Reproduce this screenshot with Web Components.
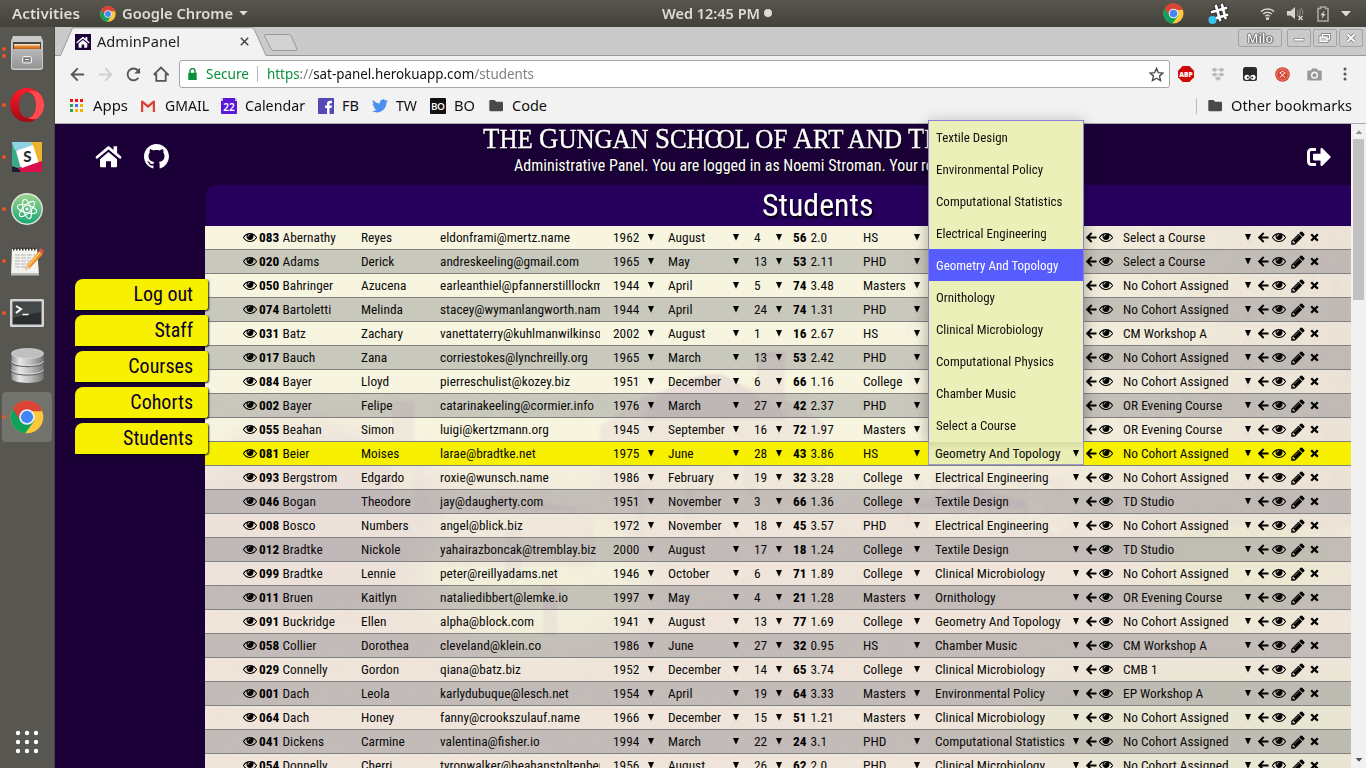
<!DOCTYPE html>
<html lang="en">
<head>
<meta charset="utf-8">
<title>AdminPanel</title>
<style>
html,body{margin:0;height:100%;overflow:hidden;background:#1b0038}
</style>
</head>
<body>
<desk-top></desk-top>
<script>
const CHROME = `<svg viewBox="0 0 48 48"><circle cx="24" cy="24" r="23" fill="#fdc83c"/><path d="M24 24L4.100 12.500A23 23 0 0 0 21.500 46.900L34 30Z" fill="#10a15b"/><path d="M24 24L4.100 12.500A23 23 0 0 1 45.500 16H24Z" fill="#da4437"/><path d="M24 14H44.700A23 23 0 0 0 4.100 12.500L14 28Z" fill="#da4437"/><circle cx="24" cy="24" r="11" fill="#f1f1f1"/><circle cx="24" cy="24" r="8.700" fill="#4286f5"/></svg>`;
const HOUSE = `<path d="M1.500 13.300L13 3.600L24.500 13.300" fill="none" stroke="currentColor" stroke-width="2.700" stroke-linecap="round" stroke-linejoin="round"/><path d="M18 2.200h3.600v8l-3.600-3zM4.500 15.200L13 8.100l8.500 7.100V22.300a.9.9 0 0 1-.9.9H15.500v-6h-5v6H5.400a.9.9 0 0 1-.9-.9z" fill="currentColor"/>`;
const FOLDER = `<svg viewBox="0 0 15 13"><path d="M1.500 1h4l1.700 1.800h5.600c.8 0 1.200.5 1.200 1.200v7c0 .8-.5 1.200-1.200 1.200H1.500c-.8 0-1.200-.4-1.200-1.200V2.200C.3 1.400.7 1 1.500 1z" fill="#4a4a4a"/></svg>`;
const ICONS = {
chrome: CHROME,
home: `<svg viewBox="0 0 26 24">${HOUSE}</svg>`,
favicon: `<svg viewBox="0 0 16 16"><rect width="16" height="16" fill="#1b0038"/><g transform="translate(1.300 1.800) scale(.51)" color="#fff">${HOUSE}</g></svg>`,
github: `<svg viewBox="0 0 16 16"><path fill="currentColor" d="M8 0C3.580 0 0 3.580 0 8c0 3.540 2.290 6.530 5.470 7.590.4.070.55-.170.55-.380 0-.190-.010-.820-.010-1.490-2.010.370-2.530-.490-2.690-.940-.090-.230-.480-.940-.820-1.130-.280-.150-.680-.520-.010-.530.630-.010 1.080.580 1.230.820.720 1.210 1.870.870 2.330.660.070-.520.280-.870.510-1.070-1.780-.200-3.640-.890-3.640-3.950 0-.870.310-1.590.820-2.150-.080-.200-.360-1.020.080-2.120 0 0 .670-.210 2.200.820.640-.180 1.320-.270 2-.270.680 0 1.360.090 2 .270 1.530-1.040 2.200-.820 2.200-.820.440 1.100.160 1.920.080 2.120.510.560.820 1.270.820 2.150 0 3.070-1.870 3.750-3.650 3.950.290.250.540.730.540 1.480 0 1.070-.010 1.930-.010 2.200 0 .210.150.460.550.380A8.013 8.013 0 0 0 16 8c0-4.420-3.580-8-8-8z"/></svg>`,
signout: `<svg viewBox="0 64 512 384"><path fill="currentColor" d="M497 273L329 441c-15 15-41 4.500-41-17v-96H152c-13.300 0-24-10.700-24-24v-96c0-13.300 10.700-24 24-24h136V88c0-21.400 25.900-32 41-17l168 168c9.300 9.400 9.300 24.600 0 34zM192 436v-40c0-6.600-5.400-12-12-12H96c-17.700 0-32-14.300-32-32V160c0-17.700 14.300-32 32-32h84c6.600 0 12-5.400 12-12V76c0-6.600-5.400-12-12-12H96c-53 0-96 43-96 96v192c0 53 43 96 96 96h84c6.600 0 12-5.400 12-12z"/></svg>`,
eye: `<svg viewBox="0 384 1792 1152"><path d="M1664 960q-152-236-381-353 61 104 61 225 0 185-131.500 316.500t-316.500 131.500-316.500-131.500-131.500-316.500q0-121 61-225-229 117-381 353 133 205 333.500 326.500t434.500 121.500 434.500-121.500 333.500-326.500zm-720-384q0-20-14-34t-34-14q-125 0-214.500 89.500t-89.500 214.500q0 20 14 34t34 14 34-14 14-34q0-86 61-147t147-61q20 0 34-14t14-34zm848 384q0 34-20 69-140 230-376.500 368.500t-499.500 138.500-499.500-139-376.500-368q-20-35-20-69t20-69q140-229 376.500-368t499.500-139 499.500 139 376.500 368q20 35 20 69z"/></svg>`,
pencil: `<svg viewBox="100 100 1600 1600"><path d="M491 1536l91-91-235-235-91 91v107h128v128h107zm523-928q0-22-22-22-10 0-17 7l-542 542q-7 7-7 17 0 22 22 22 10 0 17-7l542-542q7-7 7-17zm-54-192l416 416-832 832h-416v-416zm683 96q0 53-37 90l-166 166-416-416 166-165q36-38 90-38 53 0 91 38l235 234q37 39 37 91z"/></svg>`,
left: `<svg viewBox="0 0 11 11"><path d="M10.500 5.500H1.500M5.700 1L1.200 5.500L5.700 10" fill="none" stroke="#000" stroke-width="1.900"/></svg>`,
times: `<svg viewBox="0 0 9 9"><path d="M1.200 1.200L7.800 7.800M7.800 1.200L1.200 7.800" stroke="#000" stroke-width="2.300"/></svg>`,
caret: `<svg viewBox="0 0 6 7"><path d="M0 0h6L3 6.800z"/></svg>`,
files: `<svg viewBox="0 0 32 34"><defs><linearGradient id="a" x2="0" y2="1"><stop stop-color="#b8b8b8"/><stop offset="1" stop-color="#939393"/></linearGradient></defs><path d="M2 0h28l2 5v26q0 3-3 3H3q-3 0-3-3V5z" fill="#c9c9c9"/><path d="M2 6h28v9H2z" fill="#444"/><path d="M3 8h26v2H3z" fill="#f3dfc6"/><path d="M3 9.500h26V15H3z" fill="#e98a35"/><path d="M3 11.500h26V15H3z" fill="#c5651c"/><path d="M1 13h30v17q0 2.500-2.500 2.500h-25Q1 32.500 1 30z" fill="url(#a)"/><rect x="11.500" y="20.500" width="9" height="6.500" rx="1" fill="#999" stroke="#eee"/><path d="M13.500 22.500h5v2h-5z" fill="#fff" stroke="#555" stroke-width=".8"/></svg>`,
opera: `<svg viewBox="0 0 34 34"><defs><linearGradient id="a" x2="0" y2="1"><stop stop-color="#ff1b2d"/><stop offset="1" stop-color="#a00a16"/></linearGradient></defs><path fill-rule="evenodd" fill="url(#a)" d="M17 0a17 17 0 1 0 0 34a17 17 0 0 0 0-34zM17.500 4.200c4.700 0 8.500 5.700 8.500 12.800s-3.800 12.800-8.500 12.800S9 24.100 9 17S12.800 4.200 17.500 4.200z"/><path d="M18 3.500a17 17 0 0 1 10.300.7a17 17 0 0 1 0 25.600c-3 2-7 2-10.300.3c5-1 8-6 8-13.100S23 4.500 18 3.500z" fill="#ff4a4f"/></svg>`,
slack: `<svg viewBox="0 0 30 30"><rect width="30" height="30" rx="1.500" fill="#fff"/><path d="M0 0h24L21 4L4 9.500L0 6z" fill="#8ed3df"/><path d="M0 1L9 27L0 24z" fill="#39a082"/><path d="M0 4l4 5l5 18l-9-3z" fill="#3aa985"/><path d="M19 0h11v23L25.500 20z" fill="#ecb32e"/><path d="M30 19v11H7L6 26z" fill="#d9104b"/><path d="M0 24l6 2l3 4H0z" fill="#1c1c33"/><path d="M5 8.500L21 3L26.500 20L10 26z" fill="#fff"/><text x="15.500" y="20" text-anchor="middle" font-family="Lato" font-weight="900" font-size="15" fill="#2c2d30">S</text></svg>`,
atom: `<svg viewBox="0 0 32 32"><defs><linearGradient id="a" x2="0" y2="1"><stop stop-color="#9ad58c"/><stop offset="1" stop-color="#19a675"/></linearGradient></defs><circle cx="16" cy="16" r="15.200" fill="url(#a)" stroke="#e4e4e0" stroke-width="1.400"/><g fill="none" stroke="#fff" stroke-width="1.100"><ellipse cx="16" cy="16" rx="10" ry="3.800" transform="rotate(15 16 16)"/><ellipse cx="16" cy="16" rx="10" ry="3.800" transform="rotate(75 16 16)"/><ellipse cx="16" cy="16" rx="10" ry="3.800" transform="rotate(135 16 16)"/></g><circle cx="16" cy="16" r="1.500" fill="#fff"/></svg>`,
notes: `<svg viewBox="0 0 34 30"><path d="M2 3h25l2 26H1z" fill="#f2f2ee"/><path d="M1 27h28v2.500H1z" fill="#bdbdb8"/><path d="M3 3h24" stroke="#333" stroke-width="3" stroke-dasharray="1.500 1.500"/><path d="M5 9h20M5 12h16M5 15h18M5 18h14M5 21h13" stroke="#b5b5b5" stroke-width="1" stroke-dasharray="5 1"/><path d="M15 24L17 19L29 5L33 8L20 22z" fill="#f08a24"/><path d="M17.500 19L29.500 5.500L31 6.500L19 20.500z" fill="#ffbe62"/><path d="M15 24l2-5l3 3z" fill="#e5cfa5"/><path d="M29 5l2-3l3 3l-1.500 3z" fill="#e05050"/></svg>`,
terminal: `<svg viewBox="0 0 34 28"><rect width="34" height="28" rx="1.500" fill="#d5d5d5"/><rect x="2.500" y="2.500" width="29" height="23" fill="#2b2e2e"/><path d="M3 3h28v10L3 19z" fill="#454848"/><path d="M6 7l5 3l-5 4" fill="none" stroke="#fff" stroke-width="2"/><path d="M12.500 15.500h6" stroke="#fff" stroke-width="1.500"/></svg>`,
db: `<svg viewBox="0 0 33 35"><defs><linearGradient id="a"><stop stop-color="#8f8f8f"/><stop offset=".25" stop-color="#e6e6e6"/><stop offset=".6" stop-color="#bcbcbc"/><stop offset="1" stop-color="#777"/></linearGradient></defs><path d="M.5 5v25c0 6.500 32 6.500 32 0V5z" fill="url(#a)"/><path d="M.5 14c2 6 30 6 32 0M.5 22.500c2 6 30 6 32 0" fill="none" stroke="#666" stroke-width="1.300"/><path d="M.5 13c2 6 30 6 32 0M.5 21.500c2 6 30 6 32 0" fill="none" stroke="#eee" stroke-width=".8"/><ellipse cx="16.500" cy="5.500" rx="16" ry="5" fill="#bfbfbf" stroke="#dedede" stroke-width=".7"/></svg>`,
dots: `<svg viewBox="0 0 24 24" fill="#fff"><circle cx="3" cy="3" r="2.200"/><circle cx="12" cy="3" r="2.200"/><circle cx="21" cy="3" r="2.200"/><circle cx="3" cy="12" r="2.200"/><circle cx="12" cy="12" r="2.200"/><circle cx="21" cy="12" r="2.200"/><circle cx="3" cy="21" r="2.200"/><circle cx="12" cy="21" r="2.200"/><circle cx="21" cy="21" r="2.200"/></svg>`,
back: `<svg viewBox="0 0 16 16"><path d="M15 8H2.200M8.300 1.500L1.800 8L8.300 14.500" fill="none" stroke="currentColor" stroke-width="2"/></svg>`,
reload: `<svg viewBox="0 0 16 16"><path d="M13.200 11.500A6.300 6.300 0 1 1 12.700 3.700" fill="none" stroke="#55565a" stroke-width="2"/><path d="M15 .8V7H8.800z" fill="#55565a"/></svg>`,
house2: `<svg viewBox="0 0 16 16"><path d="M3.300 7.500v7.300h9.400V7.500M.8 8.700L8 1.500l7.200 7.200h-2.500M.8 8.700h2.500" fill="none" stroke="#55565a" stroke-width="1.800"/></svg>`,
lock: `<svg viewBox="0 0 9 12"><path d="M.3 4.800h8.400V12H.3z" fill="#0a8f3c"/><path d="M2 5V3a2.500 2.500 0 0 1 5 0v2" fill="none" stroke="#0a8f3c" stroke-width="1.400"/></svg>`,
star: `<svg viewBox="0 0 14 14"><path d="M7 1.300L8.700 5.300L13 5.700L9.800 8.500L10.800 12.700L7 10.500L3.200 12.700L4.200 8.500L1 5.700L5.300 5.300Z" fill="none" stroke="#4a4b50" stroke-width="1.300"/></svg>`,
abp: `<svg viewBox="0 0 16 16"><path d="M4.700 0h6.600L16 4.700v6.600L11.300 16H4.700L0 11.300V4.700z" fill="#d00707"/><text x="8" y="10.800" text-anchor="middle" font-family="Open Sans" font-size="7.500" font-weight="800" fill="#fff" textLength="13.500" lengthAdjust="spacingAndGlyphs">ABP</text></svg>`,
dropbox: `<svg viewBox="0 0 14 14" fill="#b9b9b9"><path d="M3.700.5L7 2.700L3.700 4.900L.4 2.700zM10.300.5l3.300 2.200l-3.300 2.200L7 2.700zM3.700 5.400L7 7.600L3.700 9.800L.4 7.600zM10.300 5.400l3.300 2.200l-3.300 2.200L7 7.600zM7 9.300l3.200 2.200L7 13.700l-3.200-2.200z"/></svg>`,
mask: `<svg viewBox="0 0 14 14"><rect width="14" height="14" rx="2.500" fill="#2a2a2a"/><circle cx="4" cy="10.300" r="2.600" fill="#fff"/><circle cx="10" cy="10.300" r="2.600" fill="#fff"/><circle cx="4.800" cy="10.500" r="1" fill="#222"/><circle cx="9.200" cy="10.500" r="1" fill="#222"/></svg>`,
redx: `<svg viewBox="0 0 15 15"><circle cx="7.500" cy="7.500" r="7.300" fill="#d4452f"/><circle cx="7.500" cy="7.500" r="5.600" fill="none" stroke="#eb9a89" stroke-width=".8"/><path d="M4.500 6.200l3-2l3 2M5 5.800l5 4.700M10 5.800l-5 4.700" stroke="#fff" fill="none" stroke-width=".9"/></svg>`,
camera: `<svg viewBox="0 0 15 13"><path d="M1 2.500h3L5.200.5h4.600L11 2.500h3q.7 0 .7.700v8.600q0 .7-.7.700H1q-.7 0-.7-.7V3.200q0-.7.7-.7z" fill="#999"/><circle cx="7.500" cy="7.200" r="3.600" fill="#f2f2f2"/><circle cx="7.500" cy="7.200" r="2" fill="#999"/></svg>`,
kebab: `<svg viewBox="0 0 4 14" fill="#55565a"><circle cx="2" cy="2" r="1.500"/><circle cx="2" cy="7" r="1.500"/><circle cx="2" cy="12" r="1.500"/></svg>`,
apps: `<svg viewBox="0 0 13 13"><path d="M0 0h3v3H0zM5 0h3v3H5zM10 0h3v3h-3z" fill="#f01212"/><path d="M0 5h3v3H0zM0 10h3v3H0z" fill="#2aa54f"/><path d="M5 5h3v3H5z" fill="#4c6cf0"/><path d="M10 5h3v3h-3zM5 10h3v3H5zM10 10h3v3h-3z" fill="#f4b400"/></svg>`,
gmail: `<svg viewBox="0 0 14 12"><rect y="1" width="14" height="11" fill="#ececec"/><path d="M0 1.500Q0 .3 1.500.5L7 5L12.500.5Q14 .3 14 1.500V12h-2.200V4L7 8L2.200 4V12H0z" fill="#dc4234"/></svg>`,
cal: `<svg viewBox="0 0 16 16"><rect y="1" width="16" height="15" rx="1" fill="#5a17d6"/><path d="M0 0h16v3H0z" fill="#c8c8d4"/><path d="M2 0h12v3H2z" fill="#5a17d6"/><text x="8" y="12.500" text-anchor="middle" font-family="Noto Sans" font-weight="600" font-size="10" fill="#fff" textLength="11.500" lengthAdjust="spacingAndGlyphs">22</text></svg>`,
fb: `<svg viewBox="0 0 16 16"><rect width="16" height="16" rx=".8" fill="#5547b5"/><path d="M9 16V10H7V7.600h2V6Q9 2.800 12 2.800h2V5.200h-1.400Q11.500 5.200 11.500 6.300V7.600H14L13.600 10H11.500v6z" fill="#fff"/></svg>`,
tw: `<svg viewBox="0 0 24 20"><path fill="#4a8ff0" d="M24 2.400c-.9.400-1.800.7-2.800.8 1-.6 1.800-1.600 2.200-2.700-1 .6-2 1-3.100 1.200A4.900 4.900 0 0 0 11.900 6.200C7.800 6 4.200 4 1.700.9c-1.300 2.200-.7 5.100 1.500 6.600-.8 0-1.600-.2-2.200-.6 0 2.300 1.600 4.400 3.900 4.900-.7.200-1.500.2-2.200.1.600 2 2.400 3.400 4.600 3.400A9.900 9.900 0 0 1 0 17.400a14 14 0 0 0 7.500 2.200c9.100 0 14.300-7.700 14-14.600 1-.7 1.800-1.600 2.500-2.600z"/></svg>`,
bo: `<svg viewBox="0 0 16 16"><rect width="16" height="16" rx="1" fill="#111"/><text x="8" y="11.800" text-anchor="middle" font-family="Lato" font-weight="700" font-size="10" fill="#fff" textLength="13.500" lengthAdjust="spacingAndGlyphs">BO</text></svg>`,
folder: FOLDER,
hash: `<svg viewBox="0 0 21 21"><g stroke="#333" stroke-width="4.800" stroke-linecap="round"><path d="M8 3l4 14M14 2l3.500 13M4 9l14-4M5 16l14-4"/></g><g stroke="#fff" stroke-width="2.700" stroke-linecap="round"><path d="M8 3l4 14M14 2l3.500 13M4 9l14-4M5 16l14-4"/></g><circle cx="4.500" cy="17" r="4" fill="#39c3ef"/></svg>`,
wifi: `<svg viewBox="0 0 16 14" fill="none" stroke="#d5d3cd" stroke-width="1.600"><path d="M1 5a10 10 0 0 1 14 0M3.300 7.600a6.600 6.600 0 0 1 9.400 0M5.500 10a3.600 3.600 0 0 1 5 0"/><circle cx="8" cy="12.500" r="1" fill="#ddd"/></svg>`,
vol: `<svg viewBox="0 0 17 15"><path d="M0 5h3.500L8 1v12L3.500 9.500H0z" fill="#d5d3cd"/><path d="M10 4.500q1.700 2.500 0 5.500M12 3q2.500 4 0 7.500M14 1.500q2.500 4 1.500 7" fill="none" stroke="#88867f" stroke-width="1.200"/><path d="M11.500 10l4 4M15.500 10l-4 4" stroke="#d5d3cd" stroke-width="1.500"/></svg>`,
bat: `<svg viewBox="0 0 12 16"><path d="M1 2.500h2.500V1h5v1.500H11V15H1z" fill="none" stroke="#aaa8a2" stroke-width="1.600"/><path d="M7.500 4.500L3.300 9.300H5.600L4.500 13L8.700 8H6.400z" fill="#d5d3cd"/></svg>`,
down: `<svg viewBox="0 0 10 6"><path d="M0 0h10L5 5.500z" fill="currentColor"/></svg>`,
min: `<svg viewBox="0 0 22 16"><rect x="6" y="8.500" width="10" height="2.500" fill="#fff" stroke="#888" stroke-width=".8"/></svg>`,
max: `<svg viewBox="0 0 22 16"><g fill="none" stroke="#777" stroke-width="2.800"><rect x="8.500" y="4.500" width="7" height="4.500"/><rect x="6" y="7" width="7" height="4.500"/></g><g fill="none" stroke="#fff" stroke-width="1.300"><rect x="8.500" y="4.500" width="7" height="4.500"/><rect x="6" y="7" width="7" height="4.500" fill="#ccc"/></g></svg>`,
close: `<svg viewBox="0 0 22 16"><path d="M7.500 4.500l7 7M14.500 4.500l-7 7" stroke="#777" stroke-width="3.400"/><path d="M7.500 4.500l7 7M14.500 4.500l-7 7" stroke="#fff" stroke-width="1.900"/></svg>`,
tabx: `<svg viewBox="0 0 9 9"><path d="M.8.8l7.400 7.400M8.200.8L.8 8.200" stroke="#444" stroke-width="1.500"/></svg>`
};
function make(el, css, html){
  const r = el.shadowRoot || el.attachShadow({mode:'open'});
  r.innerHTML = `<style>*{box-sizing:border-box}${css}</style>${html}`;
  return r;
}
const ic = (n,w,h,m='',c='') => `<ui-icon name="${n}" style="width:${w}px;height:${h||w}px;${m?`margin-left:${m}px;`:''}${c?`color:${c}`:''}"></ui-icon>`;

customElements.define('ui-icon', class extends HTMLElement{
  connectedCallback(){ make(this, `:host{display:block;flex:none}svg{display:block;width:100%;height:100%}`, ICONS[this.getAttribute('name')]||''); }
});

/* Condensed text: squeezed by a shared ratio, or to the width in the w attribute. */
const PROBE = document.createElement('span');
PROBE.style.cssText = 'position:absolute;visibility:hidden;white-space:pre;font:400 40px "Roboto Condensed",Roboto,sans-serif;font-stretch:condensed';
PROBE.textContent = 'Geometry And Topology';
document.body.append(PROBE);
const K = 125.5 / (PROBE.getBoundingClientRect().width / 3);
PROBE.remove();
customElements.define('fit-text', class extends HTMLElement{
  connectedCallback(){
    const r = make(this, `:host{display:block;flex:none;white-space:pre}span{display:inline-block;transform-origin:0 50%}`, `<span><slot></slot></span>`);
    const s = r.querySelector('span'), n = s.getBoundingClientRect().width;
    const w = this.hasAttribute('w') ? +this.getAttribute('w') : n*K*(+this.getAttribute('r')||1);
    if (Math.abs(w/n-1) > .004) s.style.transform = `scaleX(${w/n})`;
    this.style.width = w+'px';
  }
});

customElements.define('top-bar', class extends HTMLElement{
  connectedCallback(){ make(this, `:host{display:flex;align-items:center;height:27px;background:linear-gradient(#58564e,#42413b);color:#dfdcd5;font:600 14px/26px "Noto Sans",sans-serif}
  .dot{width:8px;height:8px;border-radius:50%;background:#dfdcd5;margin:-1px 0 0 4px}`,
  `<fit-text w="68" style="margin-left:12px">Activities</fit-text>${ic('chrome',16,16,20)}<fit-text w="111" style="margin-left:6px">Google Chrome</fit-text>${ic('down',9,5,6)}
  <fit-text w="98" style="margin-left:414px">Wed 12:45 PM</fit-text><span class="dot"></span>${ic('chrome',21,21,391)}${ic('hash',21,21,24)}${ic('wifi',15,13,31)}${ic('vol',17,15,12)}${ic('bat',12,16,13)}${ic('down',10,6,12)}`); }
});

customElements.define('app-launcher', class extends HTMLElement{
  connectedCallback(){
    const a=[['files',32,34,2],['opera',34,34,1],['slack',30,30,1],['atom',32,32,1],['notes',34,30,1],['terminal',34,28,1],['db',33,35,0],['chrome',34,34,1]];
    make(this, `:host{display:flex;flex-direction:column;width:55px;background:#585650;box-shadow:inset -1px 0 #45443f}
    .i{position:relative;height:52.100px;display:flex;align-items:center;justify-content:center;padding:0 1px 1px 0}
    .i.on::before{content:"";position:absolute;left:2px;top:0;width:50px;height:50px;border-radius:4px;background:#72736c}
    ui-icon{position:relative}
    .d{position:absolute;left:2px;display:grid;gap:3px}.d i{width:4px;height:4px;border-radius:50%;background:#e9571f}
    .g{margin:auto 0 14px 15px}`,
    a.map(([n,w,h,d],i)=>`<div class="i ${i==7?'on':''}"><span class="d">${'<i></i>'.repeat(d)}</span>${ic(n,w,h)}</div>`).join('')+`<div class="g">${ic('dots',24,24)}</div>`);
  }
});

customElements.define('tab-strip', class extends HTMLElement{
  connectedCallback(){ make(this, `:host{display:flex;height:29px;background:linear-gradient(#cacaca 28px,#999 28px)}
  .tab{width:215px;height:29px;display:flex;align-items:center;background:no-repeat url("data:image/svg+xml,%3Csvg xmlns='http://www.w3.org/2000/svg' width='215' height='29'%3E%3Cpath d='M0 29L0 28.500H5.500L17.500 1H198.500L211 28.500H215V29z' fill='%23f2f2f2'/%3E%3Cpath d='M0 28.500H5.500L17.500.8H198.500L211 28.500H215' fill='none' stroke='%23999'/%3E%3C/svg%3E");font:14.500px "Noto Sans",sans-serif;color:#1d1d1d}
  fit-text{margin-top:-1px}
  .new{width:36px;height:18px;margin:7px 0 0 -7px}
  .btn{height:18px;border:1px solid #a3a3a3;border-radius:2px;margin-top:2px;display:flex;align-items:center;justify-content:center;font:600 13px "Noto Sans",sans-serif;color:#f6f6f6;text-shadow:0 0 1px #333,0 0 2px #333,0 0 1px #333,0 0 1px #333}`,
  `<div class="tab">${ic('favicon',16,16,20)}<fit-text w="83" style="margin-left:6px">AdminPanel</fit-text>${ic('tabx',9,9,60)}</div>
  <svg class="new" viewBox="0 0 36 18"><path d="M3 .5H26q1.500 0 2.300 1.500L34 15q.7 1.500-1 1.500H10.500Q9 16.500 8.200 15L1.500 2Q1 .5 3 .5z" fill="#d3d3d3" stroke="#999"/></svg>
  <div class="btn" style="width:44px;margin-left:939px"><fit-text w="26">Milo</fit-text></div><div class="btn" style="width:24px;margin-left:5px">${ic('min',22,16)}</div><div class="btn" style="width:24px;margin-left:2px">${ic('max',22,16)}</div><div class="btn" style="width:24px;margin-left:2px">${ic('close',22,16)}</div>`); }
});

customElements.define('tool-bar', class extends HTMLElement{
  connectedCallback(){ make(this, `:host{display:block;height:68px;background:#f2f2f2;border-bottom:1px solid #a9a9a9;font:14.500px "Noto Sans",sans-serif;color:#111}
  .r{display:flex;align-items:center}.u{height:36px;padding-left:1px}.b{height:27px;margin-top:0}
  .b fit-text{margin-top:-1px}
  .box{width:991px;height:28px;margin-left:10px;border:1px solid #a6a6a6;border-radius:3px;background:#fff;display:flex;align-items:center;line-height:24px}
  .box fit-text{margin-top:-2px}
  .v{width:1px;height:16px;background:#bbb}.g{color:#0a8f3c}.q{color:#808080}`,
  `<div class="r u">${ic('back',15,15,14,'#55565a')}<div style="transform:scaleX(-1);margin-left:13px">${ic('back',15,15,'','#cfcfcf')}</div>${ic('reload',15,15,13)}${ic('house2',16,16,12)}
  <div class="box">${ic('lock',9,12,8)}<fit-text class="g" w="43" style="margin-left:9px">Secure</fit-text><span class="v" style="margin-left:8px"></span>
  <fit-text w="267" style="margin-left:9px"><span class="g">https</span><span class="q">://</span>sat-panel.herokuapp.com<span class="q">/students</span></fit-text>${ic('star',15,15,615)}</div>
  ${ic('abp',16,16,8)}${ic('dropbox',14,14,17)}${ic('mask',14,14,18)}${ic('redx',15,15,18)}${ic('camera',15,13,17)}${ic('kebab',4,14,21)}</div>
  <div class="r b">${ic('apps',13,13,15)}<fit-text w="35" style="margin-left:10px">Apps</fit-text>${ic('gmail',14,12,13)}<fit-text w="44" style="margin-left:10px">GMAIL</fit-text>${ic('cal',16,16,12)}<fit-text w="60" style="margin-left:8px">Calendar</fit-text>${ic('fb',16,16,13)}<fit-text w="17" style="margin-left:8px">FB</fit-text>${ic('tw',16,14,13)}<fit-text w="21" style="margin-left:8px">TW</fit-text>${ic('bo',16,16,13)}<fit-text w="21" style="margin-left:8px">BO</fit-text>${ic('folder',15,13,14)}<fit-text w="35" style="margin-left:8px">Code</fit-text>
  <span class="v" style="margin-left:649px"></span>${ic('folder',15,13,11)}<fit-text w="121" style="margin-left:8px">Other bookmarks</fit-text></div>`); }
});

customElements.define('page-header', class extends HTMLElement{
  connectedCallback(){ make(this, `:host{display:flex;height:61px;color:#fff}
  .l{display:flex;width:428px;padding:20px 0 0 40px}.m{width:823px;text-shadow:1px 1px 2px #000}
  .t{display:flex;height:31px;font:27px/29px "Liberation Serif",serif;text-transform:uppercase;-webkit-text-stroke:.35px #fff}
  .t b{font-weight:400;font-size:29px}.t i{font-style:normal;letter-spacing:-.24em}
  .s{display:flex;padding-left:31px;font:16px/22px "Roboto Condensed",Roboto,sans-serif;font-stretch:condensed}`,
  `<div class="l">${ic('home',27,24)}${ic('github',25,25,22)}</div>
  <div class="m"><div class="t"><fit-text w="419"><b>T</b>he <b>G</b>ungan <b>S</b>ch<i>o</i>ol of <b>A</b>rt and</fit-text><fit-text w="34" style="margin-left:6px"><b>T</b>h</fit-text></div>
  <div class="s"><fit-text w="403">Administrative Panel. You are logged in as Noemi Stroman. Your</fit-text><fit-text style="margin-left:4px">ro</fit-text></div></div>
  ${ic('signout',24,18,1)}`);
  this.shadowRoot.lastElementChild.style.marginTop='24px'; }
});

customElements.define('side-nav', class extends HTMLElement{
  connectedCallback(){ make(this, `:host{display:flex;flex-direction:column;gap:5px;width:133px;margin:94px 1px 0 20px;position:relative;z-index:2}
  a{display:flex;justify-content:flex-end;height:30.500px;margin-bottom:.5px;padding-right:15px;background:#f7f100;border-radius:8px 3px 3px 0;box-shadow:1px 1px 2px rgba(0,0,0,.85);color:#0c0030;font:20px/30px "Roboto Condensed",Roboto,sans-serif;font-stretch:condensed}`,
  ['Log out','Staff','Courses','Cohorts','Students'].map(t=>`<a><fit-text>${t}</fit-text></a>`).join('')); }
});

customElements.define('student-row', class extends HTMLElement{
  connectedCallback(){
    const d = this.getAttribute('data').split('|'), t = (x,b)=>`<div class="c ${b||''}"><fit-text>${x}</fit-text></div>`, v = ic('caret',6,7,1);
    make(this, `:host{display:grid;grid-template-columns:17px 23.500px 78.500px 79px 160px 13px 34px 21px 64px 22px 21px 18px 17.500px 52.500px 50px 22px 137px 14px 13px 24px 121px 14px 14px 19px 18px 12px;align-items:center;height:24px;padding-left:37px;border-bottom:1px solid #808080;font:13.333px/23px "Roboto Condensed",Roboto,sans-serif;font-stretch:condensed;color:#0b0b0b}
    :host([alt]){background:rgba(20,20,50,.2)}:host([on]){background:#f7f100}
    ui-icon[name=caret]{position:relative;top:-.5px}
    .c{overflow:hidden;height:23px}.b{font-weight:700;color:#000}
    .sel{grid-column:span 2;display:grid;grid-template-columns:137px 14px;align-items:center;height:23px}
    :host([on]) .sel{margin:-1px -2px 0 -7px;width:156px;height:24px;padding-left:6px;border:1px solid #a099cc;border-top-color:#8b80d6;background:linear-gradient(#d5dba2,#e9eeb5 9px)}`,
    ic('eye',14,9,.5)+t(d[0],'b')+t(d[1])+t(d[2])+t(d[3])+'<i></i>'+t(d[4])+v+t(d[5])+v+t(d[6])+v+t(d[7],'b')+t(d[8])+t(d[9])+v+
    `<div class="sel">${t(d[10])}${v}</div>`+ic('left',11,11)+ic('eye',14,9,.3)+t(d[11])+v+ic('left',11,11)+ic('eye',14,9,-.3)+ic('pencil',14,14,-.3)+ic('times',9,9,.5));
  }
});

const ROWS = `083|Abernathy|Reyes|eldonframi@mertz.name|1962|August|4|56|2.0|HS||Select a Course
020|Adams|Derick|andreskeeling@gmail.com|1965|May|13|53|2.11|PHD||Select a Course
050|Bahringer|Azucena|earleanthiel@pfannerstilllockm|1944|April|5|74|3.48|Masters||No Cohort Assigned
074|Bartoletti|Melinda|stacey@wymanlangworth.nam|1944|April|24|74|1.31|PHD||No Cohort Assigned
031|Batz|Zachary|vanettaterry@kuhlmanwilkinso|2002|August|1|16|2.67|HS||CM Workshop A
017|Bauch|Zana|corriestokes@lynchreilly.org|1965|March|13|53|2.42|PHD||No Cohort Assigned
084|Bayer|Lloyd|pierreschulist@kozey.biz|1951|December|6|66|1.16|College||No Cohort Assigned
002|Bayer|Felipe|catarinakeeling@cormier.info|1976|March|27|42|2.37|PHD||OR Evening Course
055|Beahan|Simon|luigi@kertzmann.org|1945|September|16|72|1.97|Masters||OR Evening Course
081|Beier|Moises|larae@bradtke.net|1975|June|28|43|3.86|HS|Geometry And Topology|No Cohort Assigned
093|Bergstrom|Edgardo|roxie@wunsch.name|1986|February|19|32|3.28|College|Electrical Engineering|No Cohort Assigned
046|Bogan|Theodore|jay@daugherty.com|1951|November|3|66|1.36|College|Textile Design|TD Studio
008|Bosco|Numbers|angel@blick.biz|1972|November|18|45|3.57|PHD|Electrical Engineering|No Cohort Assigned
012|Bradtke|Nickole|yahairazboncak@tremblay.biz|2000|August|17|18|1.24|College|Textile Design|TD Studio
099|Bradtke|Lennie|peter@reillyadams.net|1946|October|6|71|1.89|College|Clinical Microbiology|No Cohort Assigned
011|Bruen|Kaitlyn|nataliedibbert@lemke.io|1997|May|4|21|1.28|Masters|Ornithology|OR Evening Course
091|Buckridge|Ellen|alpha@block.com|1941|August|13|77|1.69|College|Geometry And Topology|No Cohort Assigned
058|Collier|Dorothea|cleveland@klein.co|1986|June|27|32|0.95|HS|Chamber Music|CM Workshop A
029|Connelly|Gordon|qiana@batz.biz|1952|December|14|65|3.74|College|Clinical Microbiology|CMB 1
001|Dach|Leola|karlydubuque@lesch.net|1954|April|19|64|3.33|Masters|Environmental Policy|EP Workshop A
064|Dach|Honey|fanny@crookszulauf.name|1966|December|15|51|1.21|Masters|Clinical Microbiology|No Cohort Assigned
041|Dickens|Carmine|valentina@fisher.io|1994|March|22|24|3.1|PHD|Computational Statistics|No Cohort Assigned
054|Donnelly|Cherri|tyronwalker@beahanstoltenber|1956|August|26|62|2.0|PHD|Clinical Microbiology|No Cohort Assigned`.split('\n');

customElements.define('student-table', class extends HTMLElement{
  connectedCallback(){ make(this, `:host{display:block;width:1146px;height:583px;overflow:hidden}
  h1{margin:0 0 0 1px;height:41px;padding-left:556px;background:#27005e;border-radius:9px 0 0 0;box-shadow:0 -1px 1px #12002a;color:#fff;text-shadow:1px 2px 2px #000;font:400 32px/41px "Roboto Condensed",Roboto,sans-serif;font-stretch:condensed}
  .b{position:relative;height:542px;background:#f7f5df;overflow:hidden}
  .p{position:absolute;inset:0}.w{position:relative}`,
  `<h1><fit-text w="111.500">Students</fit-text></h1><div class="b">
  <svg class="p" width="1146" height="542"><defs><linearGradient id="g" x2="0" y2="1"><stop stop-color="#efe5da" stop-opacity="0"/><stop offset="1" stop-color="#efe5da"/></linearGradient><linearGradient id="h"><stop stop-color="#ece3d6" stop-opacity="0"/><stop offset="1" stop-color="#ece3d6"/></linearGradient><filter id="f"><feGaussianBlur stdDeviation="16"/></filter><filter id="s"><feGaussianBlur stdDeviation="1.200"/></filter><filter id="n" x="0" y="0" width="1" height="1"><feTurbulence type="fractalNoise" baseFrequency=".08 .06" numOctaves="4" seed="4"/><feColorMatrix values="0 0 0 0 .7  0 0 0 0 .62  0 0 0 0 .66  1.400 0 0 0 -.62"/></filter></defs>
  <rect y="220" width="1146" height="70" fill="url(#g)"/><rect y="290" width="1146" height="252" fill="#efe5da"/>
  <g filter="url(#f)"><ellipse cx="110" cy="290" rx="130" ry="95" fill="#ece2da"/><ellipse cx="1040" cy="340" rx="90" ry="60" fill="#ece8d2"/><ellipse cx="1030" cy="500" rx="220" ry="60" fill="#e8e5d2"/><ellipse cx="330" cy="350" rx="110" ry="75" fill="#f2efda"/></g>
  <rect x="700" width="446" height="300" fill="url(#h)"/>
  <g filter="url(#s)"><g fill="#f0e8da"><path d="M552 126h28v50h-28zM395 200l45-30l70-22l80 30l30 20v90H395zM240 280l45-12l45-6l60 18v60H240zM187 175h22v110h-22zM722 276l40-20l40 6l60 14v30H722z"/></g>
  <path fill="#eadfd8" d="M436 192l20-24q40-26 65-18l60 38v6H436zM552 126h28v5h-28zM712 280l48-22l62 18v6H712zM250 284l50-14l80 14z"/>
  <path fill="#ece3d9" d="M430 260h10v50h-10zM480 260h10v50h-10zM540 230h14v40h-14zM300 300h16v50h-16zM338 360h14v50h-14z"/></g>
  <rect x="700" width="446" height="310" filter="url(#n)" opacity=".28"/><rect y="160" width="700" height="382" filter="url(#n)" opacity=".1"/></svg>
  <div class="w">${ROWS.map((r,i)=>`<student-row data="${r}" ${i%2?'alt':''} ${i==9?'on':''}></student-row>`).join('')}</div></div>`); }
});

customElements.define('option-menu', class extends HTMLElement{
  connectedCallback(){ make(this, `:host{box-sizing:border-box;position:absolute;left:928px;top:120px;width:156px;height:322px;border:1px solid #8b80d6;border-bottom:0;background:#ebf0b8;box-shadow:0 3px 14px rgba(0,0,0,.32);clip-path:inset(-20px -20px 0 -20px);font:13.333px/34px "Roboto Condensed",Roboto,sans-serif;font-stretch:condensed;color:#111;z-index:5}
  div{height:32px;padding-left:7px}.on{background:#575cff;color:#fff}`,
  ['Textile Design','Environmental Policy','Computational Statistics','Electrical Engineering','Geometry And Topology','Ornithology','Clinical Microbiology','Computational Physics','Chamber Music','Select a Course'].map((t,i)=>`<div class="${i==4?'on':''}"><fit-text r=".975">${t}</fit-text></div>`).join('')); }
});

customElements.define('scroll-bar', class extends HTMLElement{
  connectedCallback(){ make(this, `:host{display:flex;flex-direction:column;align-items:center;width:15px;background:#f1f1f1}
  .t{width:11px;height:161px;background:#c1c1c1;margin-top:5px}`,
  `<div style="transform:scaleY(-1);margin-top:6px">${ic('down',8,4,'','#8f8f8f')}</div><div class="t"></div><div style="margin:auto 0 6px">${ic('down',8,4,'','#505050')}</div>`); }
});

customElements.define('desk-top', class extends HTMLElement{
  connectedCallback(){ make(this, `:host{display:flex;flex-direction:column;width:1366px;height:768px;overflow:hidden;position:relative}
  .d{display:flex;height:741px}.w{width:1311px}.p{display:flex;height:644px}.c{width:1296px;background:#1b0038}.m{display:flex}student-table{margin-left:-4px}`,
  `<top-bar></top-bar><div class="d"><app-launcher></app-launcher><div class="w"><tab-strip></tab-strip><tool-bar></tool-bar><div class="p"><div class="c"><page-header></page-header><div class="m"><side-nav></side-nav><student-table></student-table></div></div><scroll-bar></scroll-bar></div></div></div><option-menu></option-menu>`); }
});
</script>
</body>
</html>
